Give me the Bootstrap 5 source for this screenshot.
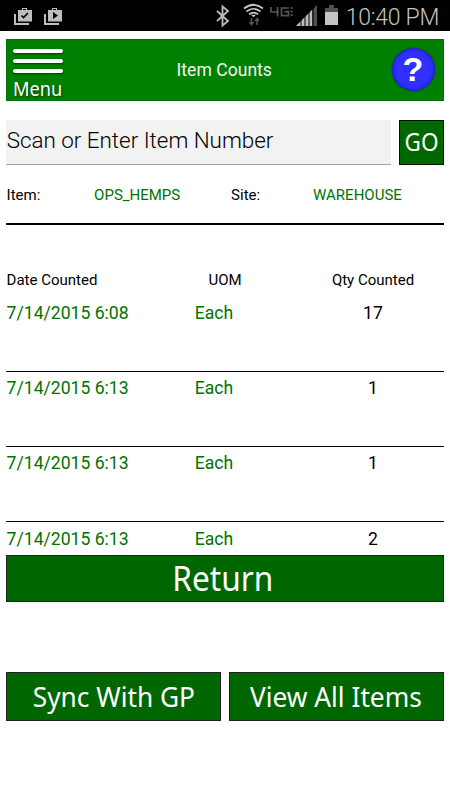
<!DOCTYPE html>
<html lang="en">
<head>
<meta charset="utf-8">
<meta name="viewport" content="width=device-width, initial-scale=1">
<title>Item Counts</title>
<link href="https://cdn.jsdelivr.net/npm/bootstrap@5.3.0/dist/css/bootstrap.min.css" rel="stylesheet">
<style>
body{font-family:Roboto,"Liberation Sans",sans-serif;color:#000;background:#fff;height:800px;overflow:hidden}
.status-bar{height:31px;background:#000;color:#c4c4c4;padding:0 11px 0 14px}
.clock{font-size:23px;font-weight:300;line-height:31px;margin-top:3px;letter-spacing:-.3px}
.screen{padding:8px 6.5px 0 6px}
.title-bar{height:62px;background:#008000;color:#f4f4f4;font-size:17.6px;display:grid;grid-template-columns:65px 1fr 66px;border:1px solid #087008}
.menu-btn{font-family:"Noto Sans",sans-serif;font-size:19px;line-height:20px;color:#fff;text-shadow:1px 1px 2px #003c00;padding:9px 0 0 6px}
.menu-lines i{display:block;width:50px;height:4px;border-radius:2px;background:#fff;margin-bottom:6px;box-shadow:0 1px 2px #003c00}
.menu-btn .fit{transform:scaleX(.96);transform-origin:0 50%}
.help-btn{width:43px;height:43px;border-radius:50%;background:#3030ff;box-shadow:inset 0 0 4px #1515a0,0 0 2px #003c00;color:#fff;font:700 34px/43px "Liberation Sans",sans-serif;margin:-2px 0 0 15px}
.entry{margin-top:19px;height:45px;gap:8px}
.entry-field{background:#f2f2f2;border:0;border-bottom:1px solid #a5a5a5;border-radius:0;font-size:22.4px;font-weight:300;line-height:26px;color:#000;padding:0 0 5px .7px;min-width:0}
.entry-field::placeholder{color:#000;opacity:1}
.green-btn{background:#006600;color:#fff;border:1px solid #222;border-radius:0;font-family:"Noto Sans",sans-serif;padding:0;display:flex;align-items:center;justify-content:center;white-space:nowrap;overflow:hidden}
.go-btn{width:45px;height:45px;flex:none;font-size:24.5px;border:1px solid #001800;font-weight:400}
.go-btn .fit{transform:scaleX(.92)}
.fit{display:inline-block;line-height:1.1}
.info{height:60px;border-bottom:2px solid #000;font-size:15px;display:grid;grid-template-columns:87.5px 137px 82px 1fr;align-items:center;padding:2px 0 0 .6px}
.go-green{color:#007300}
.heads,.count-row{display:grid;grid-template-columns:149px 1fr 141px;white-space:nowrap}
.heads{font-size:15px;line-height:20px;margin-top:45px;padding-left:.6px}
.uom-head{margin-right:8px}
.count-list{height:255px;margin-top:10px;overflow:hidden}
.count-row{grid-template-columns:188.2px 1fr 141px;height:75.35px;border-bottom:1.3px solid #000;font-size:17.6px;line-height:24px;padding:4.5px 0 0 .6px}
.count-row:first-child{height:71.500px;padding-top:.5px}
.when{letter-spacing:0}
.return-btn{height:47px;font-size:34px}
.return-btn .fit{transform:translateX(-1.5px) scaleX(.93)}
.actions{margin-top:70px;gap:8px}
.actions .green-btn{height:49px;font-size:27.8px;flex:1 1 0}
.actions .fit{transform:scaleX(.945)}
</style>
<script src="https://cdn.jsdelivr.net/npm/bootstrap@5.3.0/dist/js/bootstrap.bundle.min.js"></script>
</head>
<body>
<header class="status-bar d-flex justify-content-between align-items-center">
  <div class="d-flex">
    <svg width="50" height="31" viewBox="14 0 50 31" fill="#bdbdbd">
      <path d="M14 14h2v9h13v2H14zM44 14h2v9h13v2H44z"/>
      <path fill-rule="evenodd" d="M18 10h4V8h5v2h5v11.500H18zM23 10h3V9h-3z"/>
      <path fill-rule="evenodd" d="M48 10h4V8h5v2h5v11.500H48zM53 10h3V9h-3z"/>
      <path d="M21.500 15.500l2 2 4.500-4.500" fill="none" stroke="#000" stroke-width="1.700"/>
      <path d="M53 12l5 3.500-5 3.500z" fill="#000"/>
    </svg>
  </div>
  <div class="d-flex align-items-center">
    <svg width="131" height="31" viewBox="215 0 131 31">
      <path d="M217 11l11 10-5.500 4.500V6.500l5.500 4.500-11 10" fill="none" stroke="#bdbdbd" stroke-width="1.800"/>
      <g fill="none" stroke="#c8c8c8" stroke-width="1.700">
        <path d="M244 8.500q9.500-7.500 19 0M246.500 11.500q7-5.500 14 0M249 14.300q4.500-3.500 9 0"/>
      </g>
      <path d="M251 14.800h5l-2.500 2.400z" fill="#c8c8c8"/>
      <path d="M251.500 18v6.500M249.500 22l2 2.500 2-2.500M257 25v-6.500M255 21l2-2.500 2 2.500" fill="none" stroke="#555" stroke-width="1.500"/>
      <g fill="none" stroke="#555" stroke-width="1.700">
        <path d="M271 7v5h8M277.500 7v9.500M289 8h-7.500v7.700h7v-4h-4"/>
        <path d="M290.500 8h2.500M290.500 11.500h2.500M290.500 15h2.500" stroke-width="1.400"/>
      </g>
      <path d="M296 26L317 5v21z" fill="#505050"/>
      <path d="M296 26L312 10v16z" fill="#bdbdbd"/>
      <path d="M301 18v8M305 14v12M309 10v16M313 8v18" stroke="#000" stroke-width="1"/>
      <path d="M325 8h4V5h5v3h4v5h-13z" fill="#505050"/>
      <path d="M325 12h13v13h-13z" fill="#c4c4c4"/>
    </svg>
    <span class="clock">10:40 PM</span>
  </div>
</header>
<main class="screen">
  <div class="title-bar align-items-center">
    <div class="menu-btn align-self-start">
      <div class="menu-lines"><i></i><i></i><i></i></div>
      <span class="fit">Menu</span>
    </div>
    <div class="text-center">Item Counts</div>
    <div class="help-btn text-center">?</div>
  </div>
  <div class="entry d-flex">
    <input class="entry-field flex-grow-1" placeholder="Scan or Enter Item Number" aria-label="Item number">
    <button class="btn green-btn go-btn"><span class="fit">GO</span></button>
  </div>
  <div class="info">
    <span>Item:</span><span class="go-green">OPS_HEMPS</span><span>Site:</span><span class="go-green">WAREHOUSE</span>
  </div>
  <div class="heads">
    <span>Date Counted</span><span class="text-center uom-head">UOM</span><span class="text-center">Qty Counted</span>
  </div>
  <div class="count-list">
    <div class="count-row"><span class="when go-green">7/14/2015 6:08</span><span class="go-green">Each</span><span class="text-center">17</span></div>
    <div class="count-row"><span class="when go-green">7/14/2015 6:13</span><span class="go-green">Each</span><span class="text-center">1</span></div>
    <div class="count-row"><span class="when go-green">7/14/2015 6:13</span><span class="go-green">Each</span><span class="text-center">1</span></div>
    <div class="count-row"><span class="when go-green">7/14/2015 6:13</span><span class="go-green">Each</span><span class="text-center">2</span></div>
  </div>
  <button class="btn green-btn return-btn w-100"><span class="fit">Return</span></button>
  <div class="actions d-flex">
    <button class="btn green-btn"><span class="fit">Sync With GP</span></button>
    <button class="btn green-btn"><span class="fit">View All Items</span></button>
  </div>
</main>
</body>
</html>
